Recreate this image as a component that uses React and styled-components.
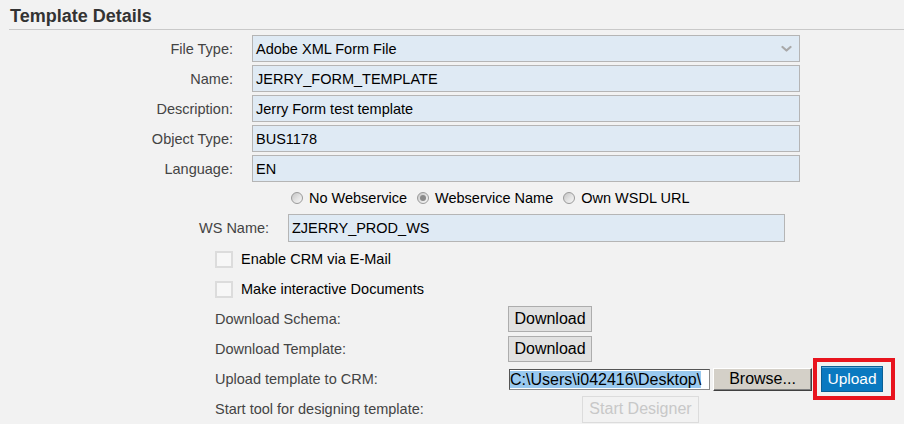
import React from 'react';
import styled, { createGlobalStyle } from 'styled-components';

const Global = createGlobalStyle`
  html, body { margin:0; padding:0; background:#f2f2f2; }
  body { font-family:"Liberation Sans", Arial, sans-serif; color:#333; }
`;

const Page = styled.div`
  width:904px; height:424px; overflow:hidden; background:#f2f2f2;
`;

const Header = styled.div`
  margin-left:9px; padding:6px 0 3px 1px; border-bottom:1px solid #c9c9c9;
  h2{ margin:0; font-size:18px; line-height:20px; font-weight:700; color:#333; }
`;

const Form = styled.div`
  display:flex; flex-direction:column; padding-top:5px;
`;

const FieldRow = styled.div`
  display:grid; grid-template-columns:233px 548px; column-gap:19px; align-items:center;
  height:27px; margin-bottom:3px;
`;

const FieldLabel = styled.label`
  text-align:right; font-size:14.5px; color:#444;
`;

const TextBox = styled.div`
  box-sizing:border-box; height:${p => p.$h || 27}px; display:flex; align-items:center; justify-content:space-between;
  padding:0 7px 0 3px; background:#dfeaf4; border:1px solid #b5b5b5;
  font-size:14.5px; color:#000; white-space:nowrap;
`;

const RadioRow = styled.div`
  display:flex; align-items:center; height:26px; padding-left:291px; margin-bottom:3px;
`;

const RadioItem = styled.label`
  display:flex; align-items:center; gap:6px; margin-right:10px; font-size:14.5px; color:#000;
`;

const Radio = styled.span`
  box-sizing:border-box; width:12px; height:12px; border-radius:50%; position:relative;
  border:1px solid #9a9a9a; background:linear-gradient(135deg, #c4c4c4 0%, #e4e4e4 55%, #f6f6f6 100%);
  &::after{
    content:''; display:${p => (p.$checked ? 'block' : 'none')};
    position:absolute; left:2px; top:2px; width:6px; height:6px; border-radius:50%; background:#8a8a8a;
  }
`;

const WsRow = styled.div`
  display:grid; grid-template-columns:89px 497px; align-items:center;
  height:28px; padding-left:199px; margin-bottom:2px;
  label{ font-size:14.5px; color:#444; }
`;

const CheckRow = styled.div`
  display:flex; align-items:center; gap:8px; height:30px; padding-left:215px;
  font-size:14.5px; color:#000;
`;

const Checkbox = styled.span`
  box-sizing:border-box; width:18px; height:17px; background:#f7f7f7; border:2px solid #dcdcdc;
`;

const ActionRow = styled.div`
  display:grid; grid-template-columns:293px auto; grid-template-rows:30px; align-items:center;
  height:30px; padding-left:215px;
`;

const ActionLabel = styled.span`
  font-size:14.5px; color:#444;
`;

const Actions = styled.div`
  display:flex; align-items:center;
`;

const GrayButton = styled.button`
  box-sizing:border-box; width:84px; height:26px; padding:0; margin:0;
  background:#e1e1e1; border:1px solid #adadad; font-family:inherit; font-size:16px; color:#000;
`;

const FileField = styled.div`
  box-sizing:border-box; width:201px; height:21px; margin-left:1px; overflow:hidden; white-space:nowrap;
  background:#fff; border:1px solid #8a8a8a; border-top-color:#555; border-left-color:#555;
  font-size:16px; line-height:19px; color:#000;
  span{ background:#99c9ef; }
`;

const BrowseButton = styled.button`
  box-sizing:border-box; width:99px; height:23px; margin:0 0 0 3px; padding:0;
  background:#d4d0c8; border:1px solid; border-color:#fff #404040 #404040 #fff;
  box-shadow:inset -1px -1px 0 #808080; font-family:inherit; font-size:16px; color:#000;
`;

const Highlight = styled.div`
  box-sizing:border-box; margin:-6px 0 -6px 1px; padding:4px 8px 4px 4px; border:4px solid #e8141e;
  display:flex;
`;

const UploadButton = styled.button`
  box-sizing:border-box; width:62px; height:26px; margin:0; padding:0;
  background:#0a79c0; border:1px solid #0a5f96; box-shadow:inset 0 1px 0 #5fa8dc;
  font-family:inherit; font-size:15.5px; color:#fff;
`;

const DisabledButton = styled.button`
  box-sizing:border-box; width:117px; height:27px; margin:0 0 0 ${p => p.$offset || 0}px; padding:0;
  background:#f2f2f2; border:1px solid #dcdcdc; font-family:inherit; font-size:16px; color:#c8c8c8;
`;

const Chevron = () => (
  <svg width="11" height="8" viewBox="0 0 11 8" fill="none">
    <path d="M1.5 2l4 3.5 4-3.5" stroke="#a9a9a9" strokeWidth="2.2" strokeLinecap="round" strokeLinejoin="round" />
  </svg>
);

const fields = [
  ['File Type:', 'Adobe XML Form File', true],
  ['Name:', 'JERRY_FORM_TEMPLATE'],
  ['Description:', 'Jerry Form test template'],
  ['Object Type:', 'BUS1178'],
  ['Language:', 'EN'],
];

export default function App() {
  return (
    <Page>
      <Global />
      <Header><h2>Template Details</h2></Header>
      <Form>
        {fields.map(([label, value, select]) => (
          <FieldRow key={label}>
            <FieldLabel>{label}</FieldLabel>
            <TextBox>
              <span>{value}</span>
              {select && <Chevron />}
            </TextBox>
          </FieldRow>
        ))}

        <RadioRow>
          <RadioItem><Radio />No Webservice</RadioItem>
          <RadioItem><Radio $checked />Webservice Name</RadioItem>
          <RadioItem><Radio />Own WSDL URL</RadioItem>
        </RadioRow>

        <WsRow>
          <label>WS Name:</label>
          <TextBox $h={28}>ZJERRY_PROD_WS</TextBox>
        </WsRow>

        <CheckRow><Checkbox />Enable CRM via E-Mail</CheckRow>
        <CheckRow><Checkbox />Make interactive Documents</CheckRow>

        <ActionRow>
          <ActionLabel>Download Schema:</ActionLabel>
          <Actions><GrayButton>Download</GrayButton></Actions>
        </ActionRow>
        <ActionRow>
          <ActionLabel>Download Template:</ActionLabel>
          <Actions><GrayButton>Download</GrayButton></Actions>
        </ActionRow>
        <ActionRow>
          <ActionLabel>Upload template to CRM:</ActionLabel>
          <Actions>
            <FileField><span>C:\Users\i042416\Desktop\</span></FileField>
            <BrowseButton>Browse...</BrowseButton>
            <Highlight><UploadButton>Upload</UploadButton></Highlight>
          </Actions>
        </ActionRow>
        <ActionRow>
          <ActionLabel>Start tool for designing template:</ActionLabel>
          <Actions><DisabledButton $offset={74} disabled>Start Designer</DisabledButton></Actions>
        </ActionRow>
      </Form>
    </Page>
  );
}
